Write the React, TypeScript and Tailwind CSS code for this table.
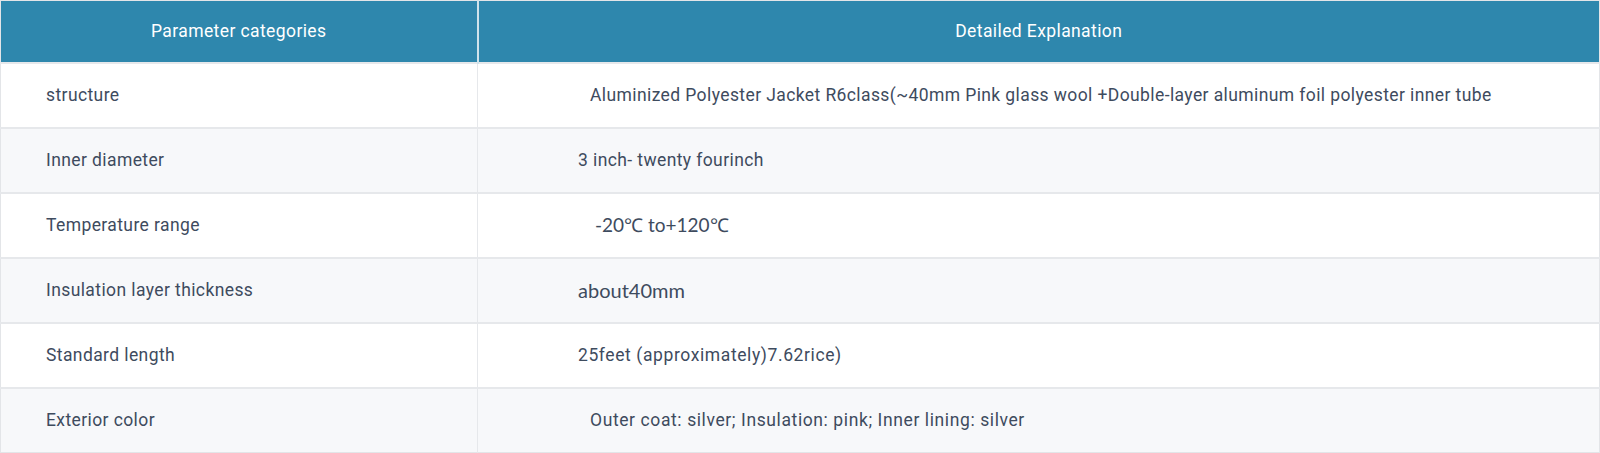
import React from 'react';

type Row = {
  name: string;
  value: string;
  cls: string;
};

const rows: Row[] = [
  {
    name: 'structure',
    value:
      'Aluminized Polyester Jacket R6class(~40mm Pink glass wool +Double-layer aluminum foil polyester inner tube',
    cls: 'pl-[112px]',
  },
  { name: 'Inner diameter', value: '3 inch- twenty fourinch', cls: 'pl-[100px]' },
  {
    name: 'Temperature range',
    value: '-20℃ to+120℃',
    cls: "pl-[117px] font-['Lato',sans-serif] text-[19px] tracking-normal",
  },
  {
    name: 'Insulation layer thickness',
    value: 'about40mm',
    cls: "pl-[100px] font-['Lato',sans-serif] text-[20px] tracking-normal",
  },
  { name: 'Standard length', value: '25feet (approximately)7.62rice)', cls: 'pl-[100px] tracking-[0.6px]' },
  {
    name: 'Exterior color',
    value: 'Outer coat: silver; Insulation: pink; Inner lining: silver',
    cls: 'pl-[112px] tracking-[0.6px]',
  },
];

export default function App() {
  return (
    <div className="w-[1600px] bg-white font-['Roboto','Liberation_Sans',sans-serif]">
      <table className="w-full border-collapse border border-[#e3e5e8] text-[17.5px] tracking-[0.4px] text-[#3e4b5e]">
        <thead>
          <tr className="h-[62px] bg-[#2e87ad] text-white">
            <th className="w-[477px] border-r-2 border-[#cfe3ec] font-normal">Parameter categories</th>
            <th className="font-normal">Detailed Explanation</th>
          </tr>
        </thead>
        <tbody>
          {rows.map((row, i) => (
            <tr
              key={row.name}
              className={i % 2 === 0 ? 'h-[65px] bg-white' : 'h-[65px] bg-[#f7f8fa]'}
            >
              <td className="border-t-2 border-r border-[#e6e8eb] pl-[45px]">{row.name}</td>
              <td className={row.cls + ' border-t-2 border-[#e6e8eb]'}>{row.value}</td>
            </tr>
          ))}
        </tbody>
      </table>
    </div>
  );
}
